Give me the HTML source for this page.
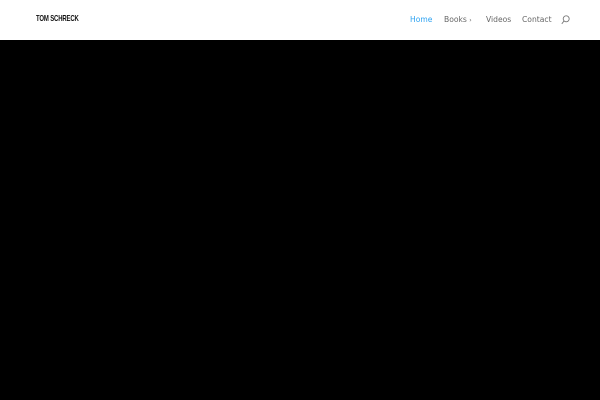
<!DOCTYPE html>
<html><head><meta charset="utf-8"><style>
html,body{margin:0;padding:0;width:600px;height:400px;overflow:hidden;background:#000;}
.hdr{position:absolute;left:0;top:0;width:600px;height:40px;background:#fff;box-shadow:0 1px 0 rgba(0,0,0,.1);}
.logo{position:absolute;left:36px;top:13px;display:inline-block;white-space:nowrap;font-family:"Liberation Sans",sans-serif;font-weight:bold;font-size:8.5px;letter-spacing:-0.2px;transform:scaleX(0.7);transform-origin:0 0;color:#111;}
.nav{position:absolute;top:15px;font-family:"DejaVu Sans","Liberation Sans",sans-serif;font-size:7.6px;color:#666;white-space:nowrap;}
</style></head><body>
<div class="hdr">
<div class="logo">TOM SCHRECK</div>
<div class="nav" style="left:410px;color:#2ea3f2">Home</div>
<div class="nav" style="left:444px">Books <span style="font-size:6px">›</span></div>
<div class="nav" style="left:486px">Videos</div>
<div class="nav" style="left:522px">Contact</div>
<svg style="position:absolute;left:561px;top:15px" width="9" height="10" viewBox="0 0 9 10"><circle cx="5.2" cy="3.8" r="3" fill="none" stroke="#777" stroke-width="0.9"/><line x1="3" y1="6" x2="0.8" y2="8.8" stroke="#777" stroke-width="0.9"/></svg>
</div>
</body></html>
